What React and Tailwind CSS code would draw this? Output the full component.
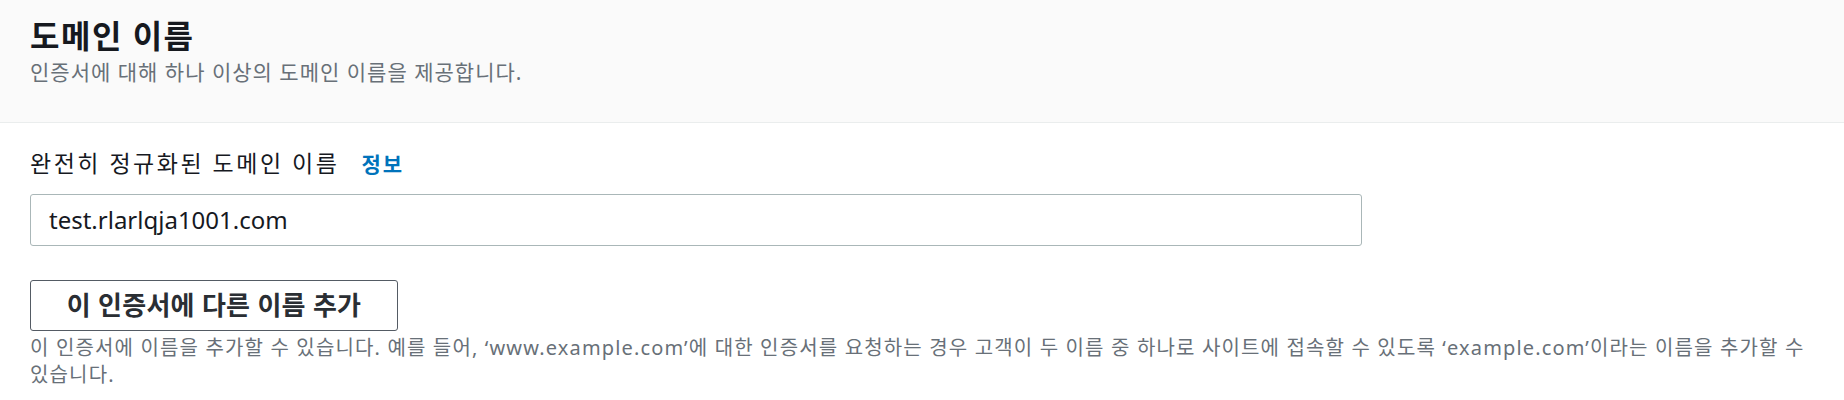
export default function App() {
  const font = { fontFamily: '"Noto Sans", "Noto Sans CJK KR", sans-serif' };
  return (
    <div className="w-[1844px] h-[400px] bg-white overflow-hidden" style={font}>
      <div className="bg-[#fafafa] border-b border-[#eaeded] h-[123px] px-[30px] pt-[16px]">
        <h2 className="text-[32px] leading-[40px] font-bold tracking-[1.5px] text-[#16191f]">도메인 이름</h2>
        <p className="text-[21px] leading-[28px] tracking-[1px] text-[#687078] mt-[2px]">인증서에 대해 하나 이상의 도메인 이름을 제공합니다.</p>
      </div>
      <div className="px-[30px] pt-[24px]">
        <div className="flex items-baseline gap-[22px]">
          <span className="text-[23px] leading-[32px] tracking-[2.5px] text-[#16191f]">완전히 정규화된 도메인 이름</span>
          <a className="text-[21px] font-bold tracking-[2px] text-[#0073bb]">정보</a>
        </div>
        <div className="mt-[13px] w-[1332px] h-[52px] border border-[#aab7b8] rounded-[3px] flex items-center px-[18px]">
          <span className="text-[24px] text-[#16191f]">test.rlarlqja1001.com</span>
        </div>
        <button className="mt-[34px] w-[368px] h-[51px] border border-[#545b64] rounded-[3px] flex items-center justify-center text-[26px] font-bold tracking-[0.3px] text-[#2a2e33]">
          이 인증서에 다른 이름 추가
        </button>
        <p className="mt-[3px] w-[1800px] break-keep text-[20px] leading-[27px] tracking-[1.15px] text-[#687078]">
          이 인증서에 이름을 추가할 수 있습니다. 예를 들어, ‘www.example.com’에 대한 인증서를 요청하는 경우 고객이 두 이름 중 하나로 사이트에 접속할 수 있도록 ‘example.com’이라는 이름을 추가할 수 있습니다.
        </p>
      </div>
    </div>
  );
}
